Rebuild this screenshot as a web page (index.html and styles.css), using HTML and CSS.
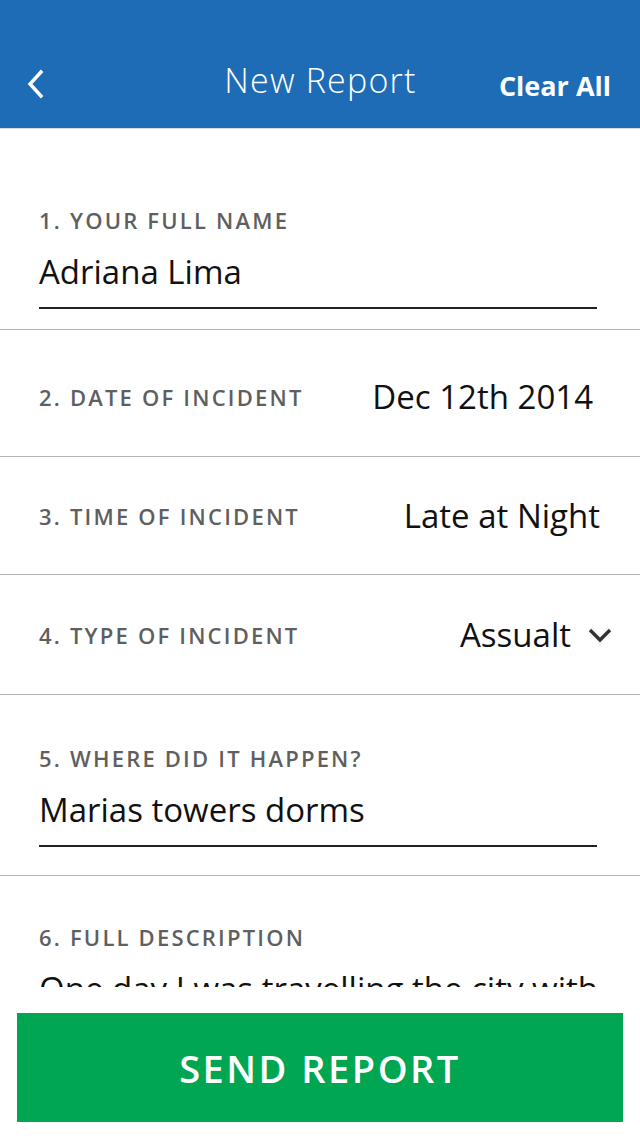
FILE: index.html
```html
<!DOCTYPE html>
<html lang="en">
<head>
<meta charset="utf-8">
<title>New Report</title>
<link rel="stylesheet" href="styles.css">
</head>
<body>
<div class="app">
  <header class="topbar">
    <button class="back" aria-label="Back">
      <svg width="20" height="30" viewBox="0 0 20 30"><path d="M15 3 L4 15 L15 27" fill="none" stroke="#fff" stroke-width="3.4" stroke-linecap="square"/></svg>
    </button>
    <h1 class="title">New Report</h1>
    <button class="clear">Clear All</button>
  </header>

  <main class="form">
    <section class="field field-stacked field-first">
      <div class="label">1. Your Full Name</div>
      <div class="input">Adriana Lima</div>
    </section>

    <section class="field field-inline field-date">
      <div class="label">2. Date of Incident</div>
      <div class="value">Dec 12th 2014</div>
    </section>

    <section class="field field-inline field-time">
      <div class="label">3. Time of Incident</div>
      <div class="value">Late at Night</div>
    </section>

    <section class="field field-inline field-type">
      <div class="label">4. Type of Incident</div>
      <div class="value select">Assualt
        <svg class="caret" width="26" height="18" viewBox="0 0 26 18"><path d="M3 4 L13 14 L23 4" fill="none" stroke="#333" stroke-width="3.4"/></svg>
      </div>
    </section>

    <section class="field field-stacked field-where">
      <div class="label">5. Where did it happen?</div>
      <div class="input">Marias towers dorms</div>
    </section>

    <section class="field field-stacked field-desc">
      <div class="label">6. Full Description</div>
      <div class="text">One day I was travelling the city with</div>
    </section>
  </main>

  <footer class="footer">
    <button class="send">Send Report</button>
  </footer>
</div>
</body>
</html>
```

FILE: styles.css
```css
* { box-sizing: border-box; }

html, body {
  margin: 0;
  padding: 0;
  background: #fff;
}

body {
  font-family: "Open Sans", "Noto Sans", sans-serif;
  color: #111;
}

.app {
  height: 1136px;
  display: flex;
  flex-direction: column;
  overflow: hidden;
}

.topbar {
  flex: none;
  height: 129px;
  padding-top: 40px;
  background: #1e6cb6;
  border-bottom: 1px solid #d9d9d9;
  display: flex;
  align-items: center;
}

.back {
  background: none;
  border: 0;
  padding: 0;
  margin-left: 26px;
  width: 40px;
  height: 40px;
  display: flex;
  align-items: center;
  cursor: pointer;
}

.title {
  flex: 1;
  margin: 0 0 8px;
  text-align: center;
  font-weight: 300;
  font-size: 34px;
  letter-spacing: 1.2px;
  color: #fff;
  padding-left: 76px;
}

.clear {
  background: none;
  border: 0;
  padding: 0;
  margin: 2px 29px 0 0;
  font-family: inherit;
  font-weight: 700;
  font-size: 27px;
  color: #fff;
  cursor: pointer;
}

.form {
  flex: 1;
  overflow: hidden;
}

.field {
  border-bottom: 1px solid #b5b5b5;
  padding: 0 40px 0 39px;
}

.label {
  font-size: 22px;
  line-height: 26px;
  font-weight: 600;
  letter-spacing: 2.2px;
  text-transform: uppercase;
  color: #5f5f5f;
  white-space: nowrap;
}

.field-stacked .input {
  font-size: 33px;
  line-height: 40px;
  padding-bottom: 15px;
  border-bottom: 2px solid #222;
  margin-top: 19px;
  margin-right: 3px;
}

.field-first { height: 201px; padding-top: 78px; }
.field-where { height: 181px; padding-top: 50px; }
.field-desc { padding-top: 48px; border-bottom: 0; }

.field-desc .text {
  font-size: 33px;
  line-height: 44px;
  margin-top: 17px;
  white-space: nowrap;
}

.field-inline {
  display: flex;
  align-items: center;
  justify-content: space-between;
}

.field-date { height: 127px; padding-top: 8px; }
.field-date .value { margin-right: 7px; }
.field-time { height: 118px; }
.field-type { height: 120px; padding-right: 27px; }

.value {
  font-size: 33px;
  line-height: 40px;
  color: #111;
}

.select {
  display: flex;
  align-items: center;
  gap: 16px;
}

.footer {
  flex: none;
  height: 149px;
  padding: 26px 17px 14px;
  background: #fff;
}

.send {
  width: 100%;
  height: 109px;
  border: 0;
  background: #00a651;
  color: #fff;
  font-family: inherit;
  font-weight: 600;
  font-size: 38px;
  letter-spacing: 2.5px;
  text-transform: uppercase;
  cursor: pointer;
}
```
